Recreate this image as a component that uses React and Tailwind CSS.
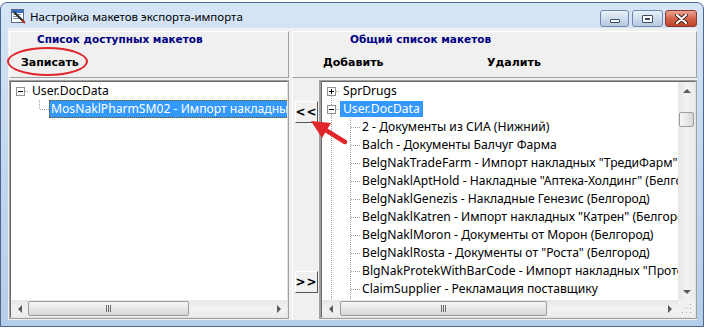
import React from "react";

const DOT = "#a0a0a0";

function VL({ x, y1 = 0, y2 = 18 }) {
  return <line x1={x + 0.5} x2={x + 0.5} y1={y1} y2={y2} stroke={DOT} strokeDasharray="1 1" />;
}
function HL({ x1, x2, y = 9 }) {
  return <line x1={x1} x2={x2} y1={y + 0.5} y2={y + 0.5} stroke={DOT} strokeDasharray="1 1" />;
}
function ExpBox({ plus }) {
  return (
    <g>
      <rect x="5.5" y="5.5" width="8" height="8" fill="#fff" stroke="#919191" />
      <line x1="7" x2="12" y1="9.5" y2="9.5" stroke="#000" />
      {plus && <line x1="9.5" x2="9.5" y1="7" y2="12" stroke="#000" />}
    </g>
  );
}

function RootRow({ label, plus, lineTop, lineBottom, selected }) {
  return (
    <div className="flex h-[18px] items-center shrink-0">
      <svg width="18" height="18" className="shrink-0">
        {lineTop && <VL x={9} y1={0} y2={5} />}
        {lineBottom && <VL x={9} y1={14} y2={18} />}
        <HL x1={14} x2={18} />
        <ExpBox plus={plus} />
      </svg>
      <span
        className={
          "h-[16px] leading-[16px] px-[3px] whitespace-nowrap " +
          (selected ? "bg-[#3399ff] text-white" : "text-black")
        }
      >
        {label}
      </span>
    </div>
  );
}

function ChildRow({ label, rootLine, last, selected }) {
  return (
    <div className="flex h-[18px] items-center shrink-0">
      <svg width="38" height="18" className="shrink-0">
        {rootLine && <VL x={9} />}
        <VL x={28} y1={0} y2={last ? 10 : 18} />
        <HL x1={29} x2={38} />
      </svg>
      <span
        className={
          "h-[18px] leading-[16px] pl-[1px] pr-[3px] whitespace-nowrap border " +
          (selected
            ? "bg-[#3399ff] text-white border-dotted border-[#7a4a10]"
            : "text-black border-transparent")
        }
      >
        {label}
      </span>
    </div>
  );
}

function Arrow({ dir }) {
  const pts = {
    left: "5,0 5,8 1,4",
    right: "1,0 1,8 5,4",
    up: "0,5 8,5 4,1",
    down: "0,1 8,1 4,5",
  }[dir];
  const w = dir === "left" || dir === "right" ? 6 : 8;
  const h = dir === "left" || dir === "right" ? 8 : 6;
  return (
    <svg width={w} height={h}>
      <polygon points={pts} fill="#5a5a5a" />
    </svg>
  );
}

function Grip() {
  return (
    <svg width="8" height="7">
      <line x1="1.5" x2="1.5" y1="0" y2="7" stroke="#6a6a6a" />
      <line x1="3.5" x2="3.5" y1="0" y2="7" stroke="#6a6a6a" />
      <line x1="5.5" x2="5.5" y1="0" y2="7" stroke="#6a6a6a" />
    </svg>
  );
}

function HScroll({ thumbMl, thumbW }) {
  return (
    <div className="flex h-[17px] flex-1 min-w-0 bg-gradient-to-b from-[#e6e6e6] via-[#f2f2f2] to-[#ebebeb]">
      <div className="w-[17px] shrink-0 flex items-center justify-center">
        <Arrow dir="left" />
      </div>
      <div className="flex-1 min-w-0 flex items-center">
        <div
          className="h-[15px] shrink-0 rounded-[2px] border border-[#9d9d9d] bg-gradient-to-b from-[#f6f6f6] via-[#e8e8e8] to-[#d6d6d6] flex items-center justify-center"
          style={{ marginLeft: thumbMl, width: thumbW }}
        >
          <Grip />
        </div>
      </div>
      <div className="w-[17px] shrink-0 flex items-center justify-center">
        <Arrow dir="right" />
      </div>
    </div>
  );
}

function VScroll() {
  return (
    <div className="w-[17px] shrink-0 flex flex-col bg-gradient-to-r from-[#e6e6e6] via-[#f2f2f2] to-[#ebebeb]">
      <div className="h-[17px] shrink-0 flex items-center justify-center">
        <Arrow dir="up" />
      </div>
      <div className="flex-1 flex flex-col items-center">
        <div className="mt-[13px] w-[15px] h-[15px] rounded-[2px] border border-[#9d9d9d] bg-gradient-to-r from-[#f6f6f6] via-[#e8e8e8] to-[#d6d6d6]" />
      </div>
      <div className="h-[17px] shrink-0 flex items-center justify-center">
        <Arrow dir="down" />
      </div>
    </div>
  );
}

function SizeGrip() {
  const dots = [
    [12, 4],
    [8, 8],
    [12, 8],
    [4, 12],
    [8, 12],
    [12, 12],
  ];
  return (
    <div className="w-[17px] h-[17px] shrink-0 bg-[#f0f0f0]">
      <svg width="17" height="17">
        {dots.map(([x, y], i) => (
          <g key={i}>
            <rect x={x} y={y} width="1" height="1" fill="#a0a0a0" />
            <rect x={x + 1} y={y + 1} width="1" height="1" fill="#ffffff" />
          </g>
        ))}
      </svg>
    </div>
  );
}

function TreeFrame({ children, className }) {
  return (
    <div className={"border border-[#a0a0a0] min-w-0 " + (className || "")}>
      <div className="w-full h-full border border-t-[#696969] border-l-[#696969] border-r-[#e3e3e3] border-b-[#e3e3e3] bg-white flex flex-col overflow-hidden">
        {children}
      </div>
    </div>
  );
}

const rightItems = [
  "2 - Документы из СИА (Нижний)",
  "Balch - Документы Балчуг Фарма",
  'BelgNakTradeFarm - Импорт накладных "ТредиФарм"',
  'BelgNaklAptHold - Накладные "Аптека-Холдинг" (Белгород)',
  "BelgNaklGenezis - Накладные Генезис (Белгород)",
  'BelgNaklKatren - Импорт накладных "Катрен" (Белгород)',
  "BelgNaklMoron - Документы от Морон (Белгород)",
  'BelgNaklRosta - Документы от "Роста" (Белгород)',
  'BlgNakProtekWithBarCode - Импорт накладных "Протек" (Белгород)',
  "ClaimSupplier - Рекламация поставщику",
  "",
];

function AppIcon() {
  return (
    <svg width="16" height="16" className="shrink-0">
      <rect x="1.5" y="1.5" width="12" height="13" fill="#fff" stroke="#5a6a80" />
      <rect x="2" y="2" width="11" height="3" fill="#3a6fc8" />
      <rect x="3" y="6" width="8" height="1" fill="#7a8aa0" />
      <rect x="3" y="8" width="6" height="1" fill="#7a8aa0" />
      <rect x="3" y="10" width="7" height="1" fill="#7a8aa0" />
      <line x1="4" y1="4" x2="14" y2="14" stroke="#2a2a2a" strokeWidth="2" />
      <line x1="12" y1="12" x2="15" y2="15" stroke="#c03020" strokeWidth="2" />
    </svg>
  );
}

function CaptionButtons() {
  return (
    <div className="flex items-start gap-[2px] self-start mt-[7px]">
      <div className="w-[29px] h-[17px] rounded-[3px] border border-[#6f87a8] bg-gradient-to-b from-[#e9f1fa] via-[#cfdcec] to-[#b4c8e0] flex items-end justify-center pb-[3px]">
        <div className="w-[10px] h-[4px] bg-white border border-[#3a4b63] rounded-[1px]" />
      </div>
      <div className="w-[31px] h-[17px] ml-[1px] rounded-[3px] border border-[#6f87a8] bg-gradient-to-b from-[#e9f1fa] via-[#cfdcec] to-[#b4c8e0] flex items-center justify-center">
        <div className="w-[11px] h-[8px] bg-white border border-[#3a4b63] rounded-[1px] flex items-center justify-center">
          <div className="w-[5px] h-[2px] border border-[#3a4b63]" />
        </div>
      </div>
      <div className="w-[32px] h-[17px] rounded-[3px] border border-[#8a3a2a] bg-gradient-to-b from-[#e8a494] via-[#d2654c] to-[#c0402a] flex items-center justify-center">
        <svg width="13" height="10">
          <path d="M2 1 L11 9 M11 1 L2 9" stroke="#4a2018" strokeWidth="4" strokeLinecap="round" />
          <path d="M2 1 L11 9 M11 1 L2 9" stroke="#ffffff" strokeWidth="2.2" strokeLinecap="round" />
        </svg>
      </div>
    </div>
  );
}

const BOLD = "font-['DejaVu_Sans',sans-serif] font-bold text-[11px]";
const BOLD_T = "font-['DejaVu_Sans',sans-serif] font-bold text-[10.5px]";

function SideButton({ label, className }) {
  return (
    <div
      className={
        "w-[23px] h-[22px] ml-[2px] border border-t-white border-l-white border-r-[#555] border-b-[#555] bg-[#f0f0f0] flex items-center justify-center text-black tracking-[1px] font-['DejaVu_Sans',sans-serif] font-bold text-[12px] " +
        (className || "")
      }
    >
      {label}
    </div>
  );
}

export default function App() {
  return (
    <div className="relative w-[706px] h-[328px] bg-white overflow-hidden font-['Noto_Sans',sans-serif]">
      <div className="mt-[2px] w-[704px] h-[325px] rounded-t-[7px] border border-[#4a678e] bg-gradient-to-b from-[#d6e5f6] via-[#c2d7ef] to-[#b6cdea] flex flex-col">
        {/* title bar */}
        <div className="h-[25px] shrink-0 flex items-center pl-[9px] pr-[6px]">
          <AppIcon />
          <span className="ml-[4px] text-[11.5px] leading-none text-black mt-[2px]">
            Настройка макетов экспорта-импорта
          </span>
          <div className="ml-auto flex self-stretch">
            <CaptionButtons />
          </div>
        </div>

        {/* client area */}
        <div className="ml-[7px] w-[689px] h-[292px] bg-[#f0f0f0] flex pt-[3px] pl-[1px] gap-[3px]">
          {/* left column */}
          <div className="w-[280px] shrink-0 flex flex-col gap-[2px]">
            <div className="h-[47px] border border-t-white border-l-white border-r-[#a0a0a0] border-b-[#a0a0a0] flex flex-col">
              <div className={"h-[14px] leading-[14px] pl-[27px] text-[#000080] " + BOLD_T}>
                Список доступных макетов
              </div>
              <div className={"mt-[10px] h-[14px] leading-[14px] pl-[11px] text-black " + BOLD}>Записать</div>
            </div>
            <TreeFrame className="h-[239px]">
              <div className="flex-1 min-w-0 overflow-hidden flex flex-col text-[12.15px]">
                <RootRow label="User.DocData" />
                <ChildRow
                  label='MosNaklPharmSM02 - Импорт накладных "Фармкомплект"'
                  last
                  selected
                />
              </div>
              <div className="flex">
                <HScroll thumbMl={0} thumbW={161} />
              </div>
            </TreeFrame>
          </div>

          {/* right column */}
          <div className="w-[405px] shrink-0 flex flex-col gap-[2px]">
            <div className="h-[47px] border border-t-white border-l-white border-r-[#a0a0a0] border-b-[#a0a0a0] flex flex-col">
              <div className={"h-[14px] leading-[14px] pl-[57px] text-[#000080] " + BOLD_T}>
                Общий список макетов
              </div>
              <div className={"mt-[10px] h-[14px] leading-[14px] pl-[30px] flex text-black " + BOLD}>
                <span className="w-[164px]">Добавить</span>
                <span>Удалить</span>
              </div>
            </div>
            <div className="flex h-[239px]">
              <div className="w-[28px] shrink-0 border-l border-l-white border-r border-r-[#a0a0a0] flex flex-col">
                <SideButton label="<<" className="mt-[21px]" />
                <SideButton label=">>" className="mt-[148px]" />
              </div>
              <TreeFrame className="flex-1">
                <div className="flex-1 min-h-0 flex overflow-hidden">
                  <div className="flex-1 min-w-0 overflow-hidden flex flex-col text-[12.15px]">
                    <RootRow label="SprDrugs" plus lineBottom />
                    <RootRow label="User.DocData" lineTop lineBottom selected />
                    {rightItems.map((t, i) => (
                      <ChildRow key={i} label={t} rootLine />
                    ))}
                  </div>
                  <VScroll />
                </div>
                <div className="flex shrink-0">
                  <HScroll thumbMl={1} thumbW={207} />
                  <SizeGrip />
                </div>
              </TreeFrame>
            </div>
          </div>
        </div>
      </div>

      {/* red annotations */}
      <div className="absolute left-[7px] top-[47px] w-[81px] h-[29px] rounded-[50%] border-[2.5px] border-[#e0262b]" />
      <svg className="absolute left-0 top-0" width="706" height="328" style={{ pointerEvents: "none" }}>
        <line x1="345" y1="142" x2="324" y2="129" stroke="#e0262b" strokeWidth="4.5" strokeLinecap="round" />
        <polygon points="311,121 331,123 322,138" fill="#e0262b" />
      </svg>
    </div>
  );
}
